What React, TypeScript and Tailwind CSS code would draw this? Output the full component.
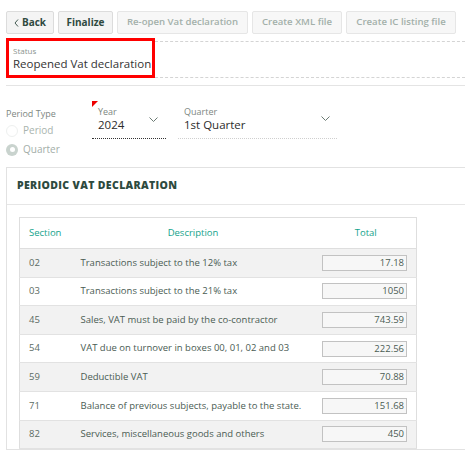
import React from "react";

const rows = [
  { s: "02", d: "Transactions subject to the 12% tax", t: "17.18" },
  { s: "03", d: "Transactions subject to the 21% tax", t: "1050" },
  { s: "45", d: "Sales, VAT must be paid by the co-contractor", t: "743.59" },
  { s: "54", d: "VAT due on turnover in boxes 00, 01, 02 and 03", t: "222.56" },
  { s: "59", d: "Deductible VAT", t: "70.88" },
  { s: "71", d: "Balance of previous subjects, payable to the state.", t: "151.68" },
  { s: "82", d: "Services, miscellaneous goods and others", t: "450" },
];

function Chevron() {
  return (
    <svg width="9" height="5" viewBox="0 0 9 5" fill="none">
      <path d="M0.5 0.5l4 4 4-4" stroke="#6b7a73" strokeWidth="1" />
    </svg>
  );
}

export default function App() {
  return (
    <div
      className="w-[465px] h-[454px] overflow-hidden bg-white text-[#3f5249]"
      style={{ fontFamily: '"Open Sans", "DejaVu Sans", sans-serif' }}
    >
      <div className="pl-[6px] pt-[11px]">
        <div className="flex gap-[4px]">
          <button className="h-[23px] w-[48px] flex items-center justify-center gap-[3px] rounded-[2px] border border-[#dcdcdc] bg-[#f4f4f4] text-[10px] font-bold text-[#2f4a3f]">
            <svg width="5" height="8" viewBox="0 0 5 8" fill="none"><path d="M4 0.5L1 4l3 3.5" stroke="#2f4a3f" strokeWidth="0.9" /></svg>
            Back
          </button>
          <button className="h-[23px] w-[55px] rounded-[2px] border border-[#dcdcdc] bg-[#f4f4f4] text-[10px] font-bold text-[#2f4a3f]">Finalize</button>
          <button className="h-[23px] w-[131px] rounded-[2px] border border-[#e6e6e6] bg-[#f7f7f7] text-[9.6px] font-semibold text-[#a3b0aa]">Re-open Vat declaration</button>
          <button className="h-[23px] w-[90px] rounded-[2px] border border-[#e6e6e6] bg-[#f7f7f7] text-[9.6px] font-semibold text-[#a3b0aa]">Create XML file</button>
          <button className="h-[23px] w-[110px] rounded-[2px] border border-[#e6e6e6] bg-[#f7f7f7] text-[9.6px] font-semibold text-[#a3b0aa]">Create IC listing file</button>
        </div>

        <div className="flex items-start mt-[4px]">
          <div className="w-[149px] h-[40px] border-[3px] border-[#ff0000] px-[4px] pt-[5px]">
            <div className="text-[8px] leading-[10px] text-[#8a948f]">Status</div>
            <div className="text-[11.5px] leading-[16px] text-[#333] whitespace-nowrap">Reopened Vat declaration</div>
          </div>
          <div className="flex-1 mt-[3px] h-[37px] border-t border-b border-dashed border-[#d4d4d4]"></div>
        </div>

        <div className="mt-[7px] border-t border-[#e4e4e4]"></div>

        <div className="flex items-start h-[62px] mt-[17px]">
          <div className="w-[86px] mt-[5px]">
            <div className="text-[9px] leading-[12px] text-[#7d8782]">Period Type</div>
            <div className="flex items-center gap-[5px] mt-[3px]">
              <span className="w-[12px] h-[12px] rounded-full border border-[#eef0ef] bg-white"></span>
              <span className="text-[10px] text-[#a9b4ae]">Period</span>
            </div>
            <div className="flex items-center gap-[5px] mt-[4px]">
              <span className="w-[12px] h-[12px] rounded-full bg-[#c9d3ce] flex items-center justify-center">
                <span className="w-[5px] h-[5px] rounded-full bg-white"></span>
              </span>
              <span className="text-[10px] text-[#a3aea8]">Quarter</span>
            </div>
          </div>
          <div className="relative w-[74px] h-[37px] -mt-[1px] pt-[4px] border-b border-dotted border-[#333]">
            <span className="absolute left-0 -top-[1px] w-0 h-0 border-t-[6px] border-r-[6px] border-t-[#e00] border-r-transparent"></span>
            <div className="pl-[6px] text-[9px] leading-[11px] text-[#7d8782]">Year</div>
            <div className="flex items-start justify-between pl-[6px] pr-[8px]">
              <span className="text-[11.5px] leading-[16px] text-[#2c2c2c]">2024</span>
              <span className="mt-[0px]"><Chevron /></span>
            </div>
          </div>
          <div className="w-[159px] h-[37px] -mt-[1px] pt-[4px] ml-[12px] border-b border-dotted border-[#cfcfcf]">
            <div className="pl-[6px] text-[9px] leading-[11px] text-[#7d8782]">Quarter</div>
            <div className="flex items-start justify-between pl-[6px] pr-[7px]">
              <span className="text-[11.5px] leading-[16px] text-[#2c2c2c]">1st Quarter</span>
              <span className="-mt-[1px]"><Chevron /></span>
            </div>
          </div>
        </div>

        <div className="mt-[2px] w-[480px] border border-[#e2e2e2]">
          <div className="h-[37px] flex items-center px-[10px] border-b border-[#e6e6e6] text-[10.5px] font-extrabold tracking-[0.35px] text-[#2d4a3e]">
            PERIODIC VAT DECLARATION
          </div>
          <div className="pt-[12px] pl-[12px]">
            <table className="w-[398px] border border-[#dedede] border-collapse text-[9.5px]">
              <thead>
                <tr className="h-[31px] border-b border-[#dedede] text-[#14a38b]">
                  <th className="text-left font-normal pl-[9px] w-[51px] text-[#14a38b]">Section</th>
                  <th className="font-normal text-center w-[245px] text-[#14a38b]">Description</th>
                  <th className="font-normal text-center text-[#14a38b]">Total</th>
                </tr>
              </thead>
              <tbody>
                {rows.map((r, i) => (
                  <tr key={r.s} className={`h-[28.6px] border-b border-[#e2e2e2] ${i % 2 === 0 ? "bg-[#f2f2f2]" : "bg-white"}`}>
                    <td className="pl-[9px] text-[#5b6b63]">{r.s}</td>
                    <td className="pl-[10px] text-left text-[#4a5c53] whitespace-nowrap">{r.d}</td>
                    <td className="pr-[9px] text-right">
                      <div className="ml-auto w-[85px] h-[16px] border border-[#c2c2c2] bg-[#f7f7f7] text-right pr-[2px] leading-[14px] text-[#4a5c53]">{r.t}</div>
                    </td>
                  </tr>
                ))}
              </tbody>
            </table>
          </div>
        </div>
      </div>
    </div>
  );
}
